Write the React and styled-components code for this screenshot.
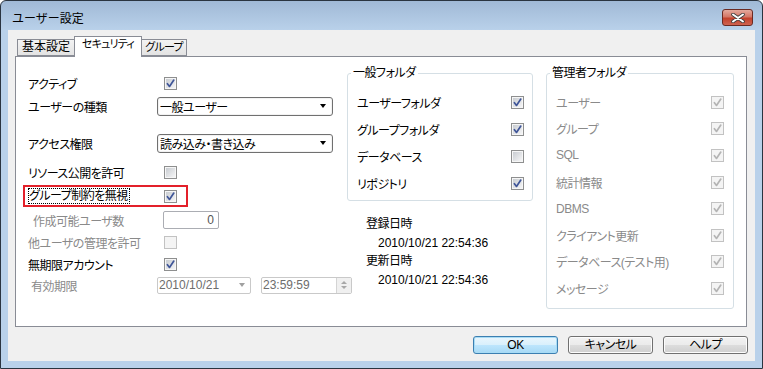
import styled, { createGlobalStyle } from "styled-components";

const GlobalStyle = createGlobalStyle`
  html, body {
    margin: 0;
    padding: 0;
    background: #fff;
  }
  body {
    font-family: "Liberation Sans", "Noto Sans CJK JP", sans-serif;
    font-size: 12px;
    color: #000;
    font-feature-settings: "palt";
    letter-spacing: -0.5px;
  }
`;

const Window = styled.div`
  width: 763px;
  height: 369px;
  box-sizing: border-box;
  border: 1px solid #2a3440;
  border-radius: 6px 6px 0 0;
  background: linear-gradient(#a0b9d6, #b9d1ea 29px, #b9d1ea);
  padding: 0 7px 7px;
  display: flex;
  flex-direction: column;
`;

const TitleBar = styled.div`
  height: 29px;
  box-sizing: border-box;
  padding: 4px 2px 0 4px;
  display: flex;
  align-items: center;
`;

const Title = styled.span`
  font-size: 12px;
  font-feature-settings: normal;
  letter-spacing: 0;
  color: #000;
`;

const CloseButton = styled.div`
  margin-left: auto;
  width: 31px;
  height: 17px;
  box-sizing: border-box;
  border: 1px solid #6b2a22;
  border-radius: 3px;
  background: linear-gradient(#e4a99d, #d47767 45%, #c2412c 55%, #cf6350);
  display: flex;
  align-items: center;
  justify-content: center;
`;

const Client = styled.div`
  flex: 1;
  background: #f0f0f0;
  padding: 6px 8px 0 7px;
  display: flex;
  flex-direction: column;
`;

const TabStrip = styled.div`
  height: 20px;
  padding-left: 2px;
  display: flex;
  align-items: flex-start;
  position: relative;
  z-index: 1;
`;

const Tab = styled.div`
  width: ${(p) => p.$w}px;
  height: ${(p) => (p.$active ? 21 : 17)}px;
  margin-top: ${(p) => (p.$active ? 0 : 3)}px;
  margin-right: -1px;
  box-sizing: border-box;
  flex-shrink: 0;
  border: 1px solid #898c95;
  border-bottom: ${(p) => (p.$active ? "none" : "1px solid #898c95")};
  background: ${(p) => (p.$active ? "#fff" : "linear-gradient(#f3f3f3, #e3e3e3)")};
  line-height: 15px;
  padding-bottom: ${(p) => (p.$active ? 4 : 0)}px;
  text-align: center;
  white-space: nowrap;
  overflow: hidden;
  position: relative;
  z-index: ${(p) => (p.$active ? 2 : 1)};
  font-size: ${(p) => (p.$kanji ? 12 : 11)}px;
  letter-spacing: ${(p) => (p.$kanji ? 0 : -0.8)}px;
`;

const Panel = styled.div`
  height: 271px;
  box-sizing: border-box;
  border: 1px solid #898c95;
  background: #fff;
  padding-left: 12px;
  display: flex;
  align-items: flex-start;
`;

const LeftColumn = styled.div`
  width: 305px;
  flex-shrink: 0;
  margin-top: 15px;
  display: flex;
  flex-direction: column;
`;

const Row = styled.div`
  display: flex;
  align-items: center;
  height: ${(p) => p.$h || 22}px;
  margin-top: ${(p) => p.$mt || 0}px;
`;

const Label = styled.span`
  width: ${(p) => p.$w || 129}px;
  flex-shrink: 0;
  box-sizing: border-box;
  padding-left: ${(p) => p.$indent || 0}px;
  color: ${(p) => (p.$disabled ? "#8a8a8a" : "#000")};
  white-space: nowrap;
`;

const Highlight = styled.div`
  display: flex;
  align-items: center;
  box-sizing: border-box;
  width: 165px;
  height: 22px;
  margin: 2px 0 0 -5px;
  border: 2px solid #e3202a;
  padding-left: 3px;
`;

const FocusText = styled.span`
  display: inline-block;
  line-height: 14px;
  border: 1px dotted #000;
  padding-right: 1px;
`;

const CheckBox = styled.span`
  position: relative;
  display: inline-block;
  width: 13px;
  height: 13px;
  box-sizing: border-box;
  flex-shrink: 0;
  margin-left: ${(p) => p.$ml || 0}px;
  border: 1px solid ${(p) => (p.$disabled ? "#c2c2c2" : "#8e8f8f")};
  padding: 1px;
  background: ${(p) =>
    p.$disabled
      ? "#f4f4f4"
      : "linear-gradient(135deg, #c8ccd1, #f5f5f6) content-box, #f6f6f6"};
  svg {
    position: absolute;
    left: -1px;
    top: -1px;
  }
`;

const Combo = styled.div`
  width: 176px;
  height: 19px;
  flex-shrink: 0;
  box-sizing: border-box;
  border: 1px solid #707070;
  border-radius: 3px;
  background: #fff;
  box-shadow: inset 0 0 0 1px #f2f2f2;
  padding: 0 6px 0 2px;
  display: flex;
  align-items: center;
`;

const Arrow = styled.span`
  margin-left: auto;
  width: 0;
  height: 0;
  border-left: 3.5px solid transparent;
  border-right: 3.5px solid transparent;
  border-top: 4px solid ${(p) => p.$color || "#000"};
`;

const NumberField = styled.input`
  width: 56px;
  height: 18px;
  flex-shrink: 0;
  box-sizing: border-box;
  margin: 0 0 0 6px;
  border: 1px solid #abadb3;
  border-radius: 2px;
  padding: 0 4px 0 0;
  font: inherit;
  letter-spacing: 0;
  text-align: right;
  color: #555;
  background: #fff;
  outline: none;
`;

const DateField = styled.div`
  width: ${(p) => p.$w}px;
  height: 17px;
  flex-shrink: 0;
  box-sizing: border-box;
  margin-left: ${(p) => p.$ml || 0}px;
  border: 1px solid #c9c9c9;
  border-radius: 2px;
  background: #fff;
  padding: 0 ${(p) => p.$pr || 0}px 0 1px;
  display: flex;
  align-items: center;
  color: #6d6d6d;
  letter-spacing: 0;
`;

const Spinner = styled.div`
  margin-left: auto;
  width: 15px;
  height: 15px;
  box-sizing: border-box;
  border-left: 1px solid #d4d4d4;
  background: #f0f0f0;
  display: flex;
  flex-direction: column;
  align-items: center;
  justify-content: center;
  gap: 2px;
`;

const SpinArrow = styled.span`
  width: 0;
  height: 0;
  border-left: 3px solid transparent;
  border-right: 3px solid transparent;
  ${(p) => (p.$up ? "border-bottom" : "border-top")}: 3px solid #a8a8a8;
`;

const MiddleColumn = styled.div`
  width: 186px;
  flex-shrink: 0;
  margin-left: 14px;
  display: flex;
  flex-direction: column;
`;

const Group = styled.fieldset`
  margin: 9px 0 0 ${(p) => p.$ml || 0}px;
  width: ${(p) => p.$w}px;
  min-width: 0;
  flex-shrink: 0;
  box-sizing: border-box;
  border: 1px solid #d5dfe5;
  border-radius: 3px;
  padding: 9px ${(p) => p.$pr}px ${(p) => p.$pb}px 9px;
`;

const Legend = styled.legend`
  margin-left: -6px;
  padding: 0 2px;
  line-height: 14px;
  font-size: 12px;
`;

const GroupRow = styled.div`
  height: ${(p) => p.$h}px;
  display: flex;
  align-items: center;
  justify-content: space-between;
  color: ${(p) => (p.$disabled ? "#8a8a8a" : "#000")};
`;

const InfoBlock = styled.div`
  margin-top: 14px;
  padding-left: 19px;
  line-height: 18.5px;
`;

const InfoValue = styled.div`
  padding-left: 12px;
  letter-spacing: 0;
`;

const Footer = styled.div`
  margin: 9px -1px 0 0;
  display: flex;
  justify-content: flex-end;
  gap: 10px;
`;

const Button = styled.div`
  width: 85px;
  height: 18px;
  box-sizing: border-box;
  border: 1px solid ${(p) => (p.$primary ? "#3c7fb1" : "#707070")};
  border-radius: 3px;
  background: ${(p) =>
    p.$primary
      ? "linear-gradient(#eaf6fd, #d9f0fc 50%, #bee6fd 50%, #a7d9f5)"
      : "linear-gradient(#f2f2f2, #ebebeb 50%, #dddddd 50%, #cfcfcf)"};
  box-shadow: inset 0 0 0 1px ${(p) => (p.$primary ? "#a8dcf5" : "#fcfcfc")};
  line-height: 16px;
  text-align: center;
`;

const Check = ({ checked, disabled, ml }) => (
  <CheckBox $disabled={disabled} $ml={ml}>
    {checked && (
      <svg width="13" height="13" viewBox="0 0 13 13">
        <path
          d="M3.4 6.7 L5.5 9.4 L9.8 3.1"
          fill="none"
          stroke={disabled ? "#b4b4b4" : "#3f5598"}
          strokeWidth="1.7"
          strokeLinecap="round"
          strokeLinejoin="round"
        />
      </svg>
    )}
  </CheckBox>
);

const generalFolders = [
  ["ユーザーフォルダ", true],
  ["グループフォルダ", true],
  ["データベース", false],
  ["リポジトリ", true],
];

const adminFolders = [
  "ユーザー",
  "グループ",
  "SQL",
  "統計情報",
  "DBMS",
  "クライアント更新",
  "データベース(テスト用)",
  "メッセージ",
];

const App = () => {
  return (
    <>
      <GlobalStyle />
      <Window>
        <TitleBar>
          <Title>ユーザー設定</Title>
          <CloseButton>
            <svg width="16" height="10" viewBox="0 0 16 10">
              <path d="M3 1.5 L13 8.5 M13 1.5 L3 8.5" stroke="#3d3d3d" strokeWidth="3.6" strokeLinecap="round" />
              <path d="M3 1.5 L13 8.5 M13 1.5 L3 8.5" stroke="#fff" strokeWidth="2" strokeLinecap="round" />
            </svg>
          </CloseButton>
        </TitleBar>
        <Client>
          <TabStrip>
            <Tab $w={58} $kanji>基本設定</Tab>
            <Tab $w={68} $active>セキュリティ</Tab>
            <Tab $w={46}>グループ</Tab>
          </TabStrip>
          <Panel>
            <LeftColumn>
              <Row>
                <Label>アクティブ</Label>
                <Check checked ml={7} />
              </Row>
              <Row $h={24}>
                <Label>ユーザーの種類</Label>
                <Combo>
                  一般ユーザー
                  <Arrow />
                </Combo>
              </Row>
              <Row $mt={14}>
                <Label>アクセス権限</Label>
                <Combo>
                  読み込み・書き込み
                  <Arrow />
                </Combo>
              </Row>
              <Row $mt={7}>
                <Label>リソース公開を許可</Label>
                <Check ml={7} />
              </Row>
              <Highlight>
                <Label $w={136}>
                  <FocusText>グループ制約を無視</FocusText>
                </Label>
                <Check checked />
              </Highlight>
              <Row $mt={2}>
                <Label $indent={5} $disabled>作成可能ユーザ数</Label>
                <NumberField value="0" readOnly />
              </Row>
              <Row>
                <Label $disabled>他ユーザの管理を許可</Label>
                <Check disabled ml={7} />
              </Row>
              <Row>
                <Label>無期限アカウント</Label>
                <Check checked ml={7} />
              </Row>
              <Row $h={20}>
                <Label $indent={3} $disabled>有効期限</Label>
                <DateField $w={94} $pr={5}>
                  2010/10/21
                  <Arrow $color="#a0a0a0" />
                </DateField>
                <DateField $w={91} $ml={10}>
                  23:59:59
                  <Spinner>
                    <SpinArrow $up />
                    <SpinArrow />
                  </Spinner>
                </DateField>
              </Row>
            </LeftColumn>

            <MiddleColumn>
              <Group $w={186} $pr={8} $pb={3}>
                <Legend>一般フォルダ</Legend>
                {generalFolders.map(([name, checked]) => (
                  <GroupRow key={name} $h={27}>
                    {name}
                    <Check checked={checked} />
                  </GroupRow>
                ))}
              </Group>
              <InfoBlock>
                <div>登録日時</div>
                <InfoValue>2010/10/21 22:54:36</InfoValue>
                <div>更新日時</div>
                <InfoValue>2010/10/21 22:54:36</InfoValue>
              </InfoBlock>
            </MiddleColumn>

            <Group $w={188} $ml={13} $pr={9} $pb={6}>
              <Legend>管理者フォルダ</Legend>
              {adminFolders.map((name) => (
                <GroupRow key={name} $h={26.6} $disabled>
                  {name}
                  <Check checked disabled />
                </GroupRow>
              ))}
            </Group>
          </Panel>
          <Footer>
            <Button $primary>OK</Button>
            <Button>キャンセル</Button>
            <Button>ヘルプ</Button>
          </Footer>
        </Client>
      </Window>
    </>
  );
};

export default App;
